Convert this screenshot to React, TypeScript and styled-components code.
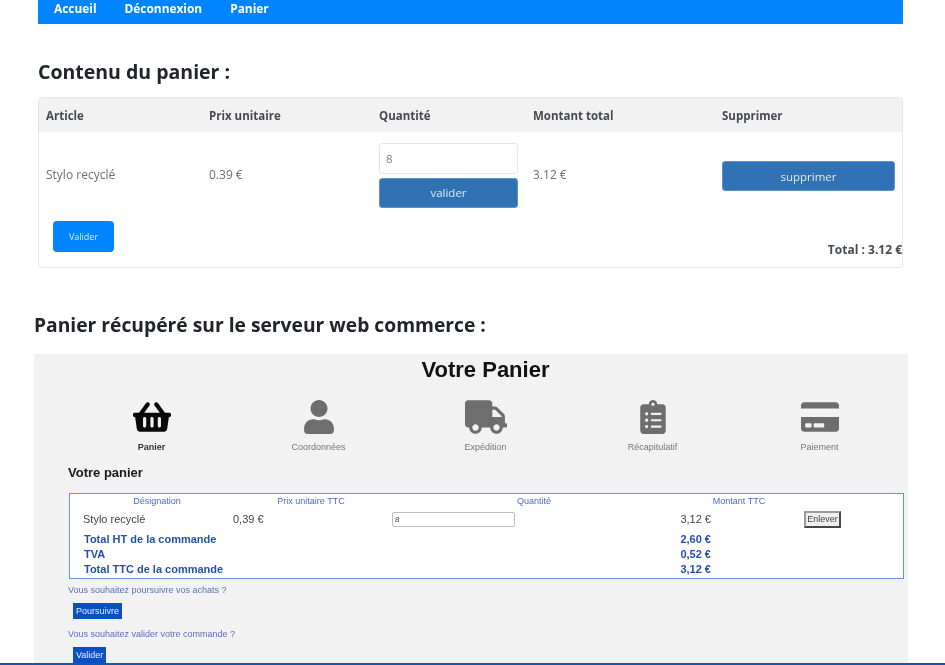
import { createGlobalStyle, styled } from 'styled-components';
import {
  FaClipboardList,
  FaCreditCard,
  FaShoppingBasket,
  FaTruck,
  FaUser,
} from 'react-icons/fa';

const STEPS = [
  { label: 'Panier', Icon: FaShoppingBasket, width: 38, active: true },
  { label: 'Coordonnées', Icon: FaUser, width: 30, active: false },
  { label: 'Expédition', Icon: FaTruck, width: 42, active: false },
  { label: 'Récapitulatif', Icon: FaClipboardList, width: 26, active: false },
  { label: 'Paiement', Icon: FaCreditCard, width: 38, active: false },
];

const TOTALS = [
  { label: 'Total HT de la commande', value: '2,60 €' },
  { label: 'TVA', value: '0,52 €' },
  { label: 'Total TTC de la commande', value: '3,12 €' },
];

export default function App() {
  return (
    <Page>
      <GlobalStyle />
      <Shop>
        <Nav>
          <NavLink>Accueil</NavLink>
          <NavLink>Déconnexion</NavLink>
          <NavLink>Panier</NavLink>
        </Nav>
        <CartTitle>Contenu du panier :</CartTitle>
        <Card>
          <CardHead>
            <span>Article</span>
            <span>Prix unitaire</span>
            <span>Quantité</span>
            <span>Montant total</span>
            <span>Supprimer</span>
          </CardHead>
          <CardRow>
            <CardText>Stylo recyclé</CardText>
            <CardText>0.39 €</CardText>
            <QuantityCell>
              <QuantityInput defaultValue="8" />
              <SteelButton>valider</SteelButton>
            </QuantityCell>
            <CardText>3.12 €</CardText>
            <DeleteButton>supprimer</DeleteButton>
          </CardRow>
          <CardFooter>
            <BlueButton>Valider</BlueButton>
            <CardTotal>Total : 3.12 €</CardTotal>
          </CardFooter>
        </Card>
      </Shop>

      <ServerTitle>Panier récupéré sur le serveur web commerce :</ServerTitle>

      <Panel>
        <PanelTitle>Votre Panier</PanelTitle>
        <Steps>
          {STEPS.map(({ label, Icon, width, active }) => (
            <Step key={label} $active={active}>
              <IconSlot $width={width}>
                <Icon />
              </IconSlot>
              <StepLabel $active={active}>{label}</StepLabel>
            </Step>
          ))}
        </Steps>
        <SubTitle>Votre panier</SubTitle>
        <OrderTable>
          <OrderHead>
            <span>Désignation</span>
            <span>Prix unitaire TTC</span>
            <span>Quantité</span>
            <span>Montant TTC</span>
          </OrderHead>
          <OrderRow>
            <span>Stylo recyclé</span>
            <span>0,39 €</span>
            <OrderInput defaultValue="8" />
            <OrderAmount>3,12 €</OrderAmount>
            <RemoveButton>Enlever</RemoveButton>
          </OrderRow>
          {TOTALS.map((total) => (
            <TotalRow key={total.label}>
              <span>{total.label}</span>
              <OrderAmount>{total.value}</OrderAmount>
            </TotalRow>
          ))}
        </OrderTable>
        <Question>Vous souhaitez poursuivre vos achats ?</Question>
        <ActionButton>Poursuivre</ActionButton>
        <Question>Vous souhaitez valider votre commande ?</Question>
        <ActionButton>Valider</ActionButton>
      </Panel>
      <BottomLine />
    </Page>
  );
}

const GlobalStyle = createGlobalStyle`
  html, body {
    margin: 0;
    background: #fff;
    overflow: hidden;
  }
`;

const Page = styled.div`
  position: relative;
  height: 665px;
  overflow: hidden;
  filter: blur(0.6px);
`;

const Shop = styled.div`
  margin: 0 42px 0 38px;
  font-family: 'Open Sans', sans-serif;
`;

const Nav = styled.nav`
  display: flex;
  gap: 28px;
  height: 24px;
  padding: 0 16px;
  background: #0084ff;
`;

const NavLink = styled.a`
  color: #fff;
  font-size: 11.9px;
  font-weight: 700;
  line-height: 17px;
`;

const CartTitle = styled.h2`
  margin: 33px 0 10px;
  color: #212529;
  font-size: 19.5px;
  font-weight: 700;
  line-height: 30px;
`;

const Card = styled.div`
  box-sizing: border-box;
  height: 171px;
  border: 1px solid #e6e6e6;
  border-radius: 4px;
  overflow: hidden;
`;

const cardColumns = '163px 170px 154px 189px 173px';

const CardHead = styled.div`
  display: grid;
  grid-template-columns: ${cardColumns};
  align-items: center;
  height: 34px;
  padding-left: 7px;
  background: #f2f2f2;
  color: #444b52;
  font-size: 11.5px;
  font-weight: 700;
`;

const CardRow = styled.div`
  display: grid;
  grid-template-columns: ${cardColumns};
  align-items: center;
  height: 86px;
  padding-left: 7px;
  color: #6a6f75;
  font-size: 12px;
`;

const CardText = styled.span`
  margin-bottom: 2px;
`;

const QuantityCell = styled.div`
  display: flex;
  flex-direction: column;
  gap: 4px;
  width: 139px;
`;

const QuantityInput = styled.input`
  box-sizing: border-box;
  width: 100%;
  height: 31px;
  padding: 0 6px;
  border: 1px solid #e3e6ee;
  border-radius: 3px;
  color: #80868c;
  font: 11.5px 'Open Sans', sans-serif;
`;

const SteelButton = styled.button`
  height: 30px;
  border: 1px solid #5f93cc;
  border-radius: 3px;
  background: #3072b3;
  color: #dfe9f3;
  font: 11.5px 'Open Sans', sans-serif;
`;

const DeleteButton = styled(SteelButton)`
  margin-top: 2px;
`;

const CardFooter = styled.div`
  display: flex;
  align-items: flex-start;
  justify-content: space-between;
  padding-left: 14px;
`;

const BlueButton = styled.button`
  width: 61px;
  height: 31px;
  margin-top: 3px;
  border: none;
  border-radius: 4px;
  background: #0084ff;
  color: #dcecff;
  font: 9px 'Open Sans', sans-serif;
`;

const CardTotal = styled.span`
  margin-top: 24px;
  color: #444b52;
  font-size: 12px;
  font-weight: 700;
  line-height: 16px;
`;

const ServerTitle = styled.h2`
  margin: 42px 0 14px 34px;
  color: #212529;
  font-family: 'Open Sans', sans-serif;
  font-size: 19.25px;
  font-weight: 700;
  line-height: 30px;
`;

const Panel = styled.section`
  box-sizing: border-box;
  height: 311px;
  margin: 0 37px 0 34px;
  padding: 0 5px 0 34px;
  background: #f2f2f2;
  font-family: 'Liberation Sans', Arial, sans-serif;
`;

const PanelTitle = styled.h1`
  margin: 0;
  padding-top: 3px;
  color: #111;
  font-size: 22px;
  font-weight: 700;
  line-height: 26px;
  text-align: center;
`;

const Steps = styled.div`
  display: grid;
  grid-template-columns: repeat(5, 1fr);
  margin-top: 17px;
`;

const Step = styled.div<{ $active: boolean }>`
  display: flex;
  flex-direction: column;
  align-items: center;
  color: ${({ $active }) => ($active ? '#0a0a0a' : '#6e6e6e')};
`;

const IconSlot = styled.div<{ $width: number }>`
  display: flex;
  height: 34px;

  svg {
    width: ${({ $width }) => $width}px;
    height: 34px;
  }
`;

const StepLabel = styled.span<{ $active: boolean }>`
  margin-top: 8px;
  color: ${({ $active }) => ($active ? '#333' : '#777')};
  font-size: 9px;
  font-weight: ${({ $active }) => ($active ? 700 : 400)};
  line-height: 10px;
`;

const SubTitle = styled.h3`
  margin: 14px 0 13px;
  color: #1a1a1a;
  font-size: 13px;
  font-weight: 700;
  line-height: 14px;
`;

const OrderTable = styled.div`
  box-sizing: border-box;
  width: 835px;
  height: 86px;
  margin-left: 1px;
  border: 1px solid #6a8fdc;
  background: #fff;
  font-size: 11px;
`;

const OrderHead = styled.div`
  display: grid;
  grid-template-columns: 174px 134px 312px 98px;
  height: 14px;
  color: #4a69c4;
  font-size: 9px;
  line-height: 14px;
  text-align: center;
`;

const OrderRow = styled.div`
  display: grid;
  grid-template-columns: 150px 159px 123px 196px auto;
  align-items: center;
  height: 20px;
  padding: 1px 0 3px 13px;
  color: #444;
`;

const OrderInput = styled.input`
  box-sizing: border-box;
  width: 123px;
  height: 15px;
  padding: 0 2px;
  border: 1px solid #bdbdbd;
  border-radius: 2px;
  color: #444;
  font: 8px 'Liberation Sans', Arial, sans-serif;
`;

const OrderAmount = styled.span`
  text-align: right;
`;

const RemoveButton = styled.button`
  box-sizing: border-box;
  width: 37px;
  height: 17px;
  margin-left: 93px;
  padding: 0;
  border: 2px outset #9a9a9a;
  background: #efefef;
  color: #444;
  font: 9px 'Liberation Sans', Arial, sans-serif;
`;

const TotalRow = styled.div`
  display: grid;
  grid-template-columns: 150px 477px;
  height: 15px;
  padding-left: 14px;
  color: #2450a8;
  font-weight: 700;
  line-height: 15px;
  white-space: nowrap;
`;

const Question = styled.p`
  margin: 6px 0 0;
  color: #5a72b8;
  font-size: 9px;
  line-height: 10px;
`;

const ActionButton = styled.button`
  display: block;
  height: 16px;
  margin: 8px 0 10px 5px;
  padding: 0 3px;
  border: none;
  background: #0b50c0;
  color: #e4ecfa;
  font: 9px 'Liberation Sans', Arial, sans-serif;
`;

const BottomLine = styled.div`
  position: absolute;
  left: 0;
  right: 0;
  bottom: 0;
  height: 2px;
  background: #1257ad;
`;
